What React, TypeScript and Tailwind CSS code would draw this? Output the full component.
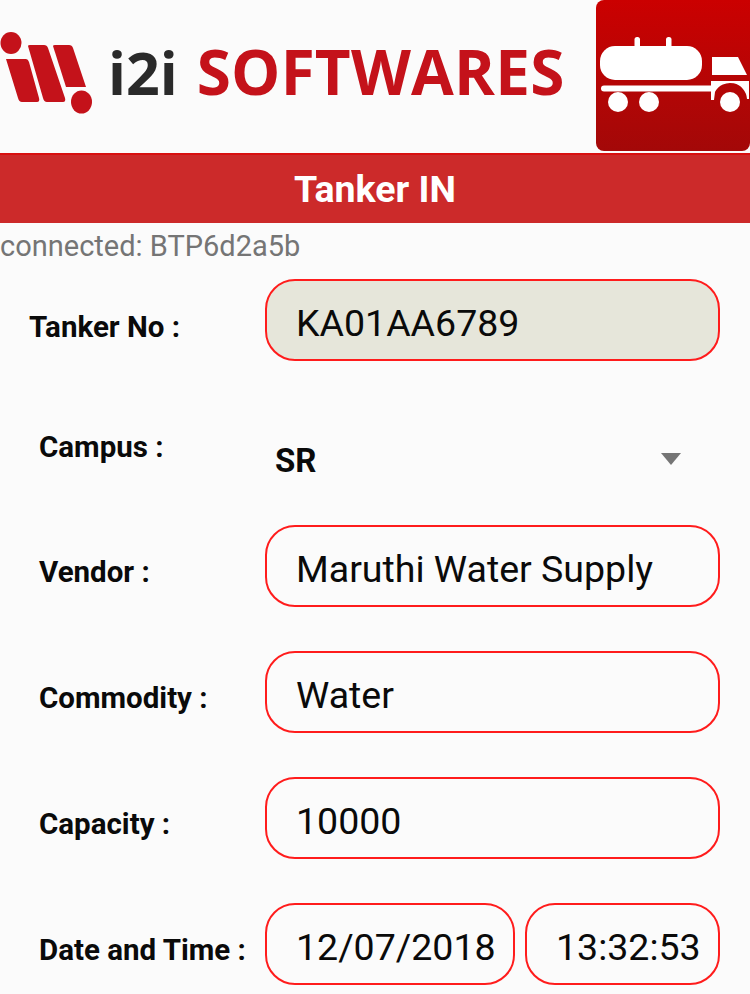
const font = { fontFamily: '"Roboto", sans-serif' };

function Logo() {
  return (
    <svg width="92" height="114" viewBox="0 0 92 114" className="shrink-0" aria-hidden="true">
      <g fill="#c4121a">
        <ellipse cx="11" cy="43" rx="10.5" ry="11" />
        <path d="M6 59 H26 Q28 59 29 62 L39 98 Q40 102 37 102 H22 Q19 102 18 98 Z" />
        <path d="M28 46 Q28 45 30 45 H44 Q47 45 48 48 L65 98 Q66 102 63 102 H47 Q44 102 43 98 Z" />
        <path d="M53 46 Q53 45 55 45 H69 Q72 45 73 48 L86 87 H66 Z" />
        <ellipse cx="81.5" cy="102" rx="10.5" ry="11.5" />
      </g>
    </svg>
  );
}

function Truck() {
  return (
    <div className="h-[151px] w-[154px] shrink-0 overflow-hidden rounded-b-lg rounded-tl-lg bg-gradient-to-b from-[#cb0000] to-[#a30808]">
      <svg width="154" height="151" viewBox="0 0 154 151" aria-hidden="true">
        <g fill="#fff">
          <rect x="4" y="46" width="102" height="34" rx="15" />
          <rect x="38.500" y="37" width="5.500" height="12" rx="2.500" />
          <rect x="70" y="37" width="5.500" height="12" rx="2.500" />
          <rect x="5" y="85.500" width="114" height="6" rx="3" />
          <path d="M116 57 H142 L151 75 H116 Z" />
          <path d="M115 81 H153 V99 L151 99 A17 17 0 0 0 119 92 L118 100 H115 Z" />
          <circle cx="22" cy="102" r="10" />
          <circle cx="53" cy="102" r="10" />
          <circle cx="134" cy="102" r="10" />
        </g>
      </svg>
    </div>
  );
}

function Field({ value, filled }: { value: string; filled?: boolean }) {
  return (
    <div
      className={`flex h-[82px] min-w-0 flex-1 items-center whitespace-nowrap rounded-[30px] border-2 border-[#ff1c1c] pl-[29px] pt-[7px] text-[37.500px] text-[#0a0a0a] ${
        filled ? "bg-[#e6e6da]" : "bg-transparent"
      }`}
    >
      {value}
    </div>
  );
}

function Label({ text, className }: { text: string; className: string }) {
  return (
    <div className={`w-[265px] shrink-0 whitespace-nowrap text-[29.500px] font-bold text-[#0a0a0a] ${className}`}>{text}</div>
  );
}

export default function App() {
  return (
    <div className="h-[994px] w-[750px] overflow-hidden bg-[#fbfbfb]" style={font}>
      <header className="flex h-[151px] items-start">
        <Logo />
        <div
          className="mt-[36px] flex flex-1 items-baseline whitespace-nowrap pl-[16px] font-bold leading-[70px]"
          style={{ fontFamily: '"Open Sans", sans-serif' }}
        >
          <span className="text-[59px] text-[#2a2a2a]">i2i</span>
          <span className="ml-[19px] text-[62px] tracking-[0.2px] text-[#c4121a]">SOFTWARES</span>
        </div>
        <Truck />
      </header>

      <div className="mt-[2px] flex h-[70px] items-center justify-center border-t-2 border-[#d80f0f] bg-[#cc2a2a] text-[37.500px] font-bold text-white">
        Tanker IN
      </div>

      <div className="mt-[5px] h-[36px] text-[29px] leading-[36px] text-[#757575]">connected: BTP6d2a5b</div>

      <main className="mt-[15px] flex flex-col pr-[30px]">
        <div className="flex items-center">
          <Label text="Tanker No :" className="pl-[29px] pt-[14px]" />
          <Field value="KA01AA6789" filled />
        </div>

        <div className="mt-[58px] flex h-[84px] items-start">
          <Label text="Campus :" className="pl-[39px] pt-[6px]" />
          <div className="flex flex-1 items-center justify-between pl-[10px] pr-[39px] pt-[17px]">
            <span className="text-[33px] font-bold text-[#0a0a0a]">SR</span>
            <svg width="20" height="12" viewBox="0 0 20 12" className="mb-[4px]" aria-hidden="true">
              <path d="M0 0 H20 L10 12 Z" fill="#757575" />
            </svg>
          </div>
        </div>

        <div className="mt-[22px] flex items-center">
          <Label text="Vendor :" className="pl-[39px] pt-[12px]" />
          <Field value="Maruthi Water Supply" />
        </div>

        <div className="mt-[44px] flex items-center">
          <Label text="Commodity :" className="pl-[39px] pt-[12px]" />
          <Field value="Water" />
        </div>

        <div className="mt-[44px] flex items-center">
          <Label text="Capacity :" className="pl-[39px] pt-[12px]" />
          <Field value="10000" />
        </div>

        <div className="mt-[44px] flex items-center">
          <Label text="Date and Time :" className="pl-[39px] pt-[12px]" />
          <div className="flex flex-1 gap-[10px]">
            <div className="flex w-[250px] shrink-0">
              <Field value="12/07/2018" />
            </div>
            <div className="flex min-w-0 flex-1">
              <Field value="13:32:53" />
            </div>
          </div>
        </div>
      </main>
    </div>
  );
}
